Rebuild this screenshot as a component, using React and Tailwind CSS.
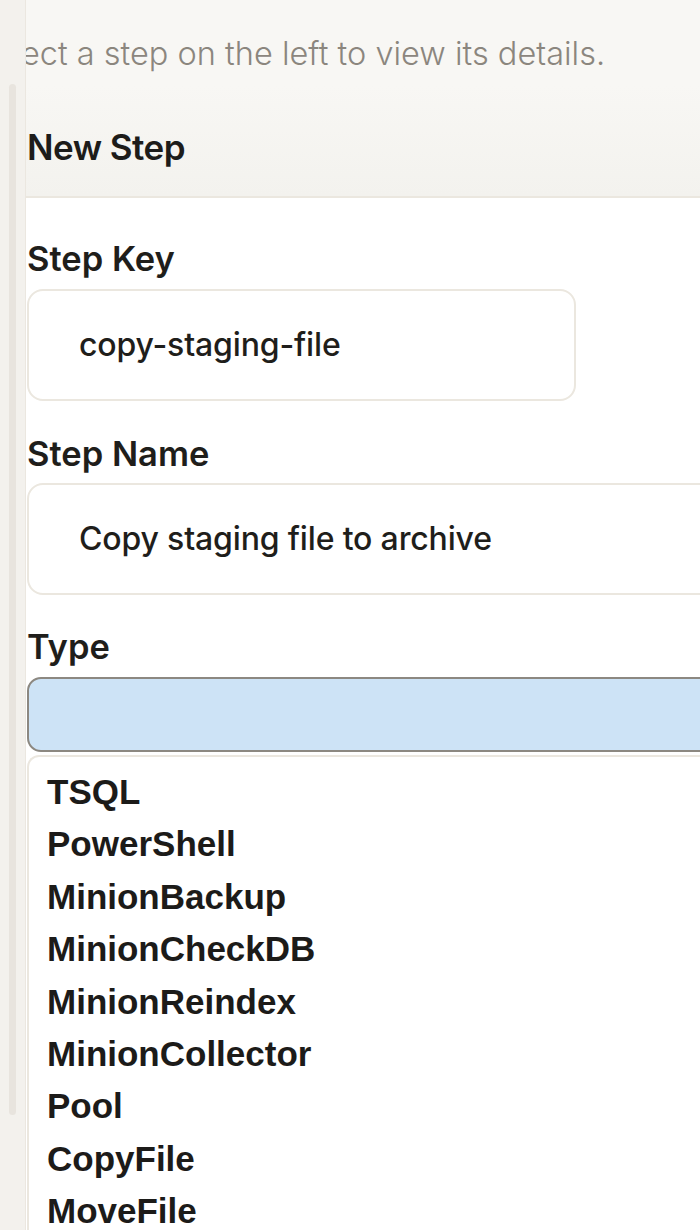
import React from 'react';

const STEP_TYPES = [
  'TSQL',
  'PowerShell',
  'MinionBackup',
  'MinionCheckDB',
  'MinionReindex',
  'MinionCollector',
  'Pool',
  'CopyFile',
  'MoveFile',
];

const Label = ({ children }) => (
  <label className="block text-[34.5px] leading-[38px] font-semibold text-[#1f1e1b]">
    {children}
  </label>
);

const TextField = ({ value, className }) => (
  <div
    className={`h-[112px] flex items-center pl-[50px] bg-white border-2 border-[#ebe7df] rounded-[16px] text-[32px] font-medium text-[#1f1e1b] tracking-[-0.005em] whitespace-nowrap ${className}`}
  >
    {value}
  </div>
);

export default function App() {
  return (
    <div
      className="flex min-h-screen bg-[#f8f7f4] overflow-hidden"
      style={{ fontFamily: 'Inter, "Noto Sans", sans-serif' }}
    >
      {/* sidebar edge with its scrollbar */}
      <aside className="w-[26px] shrink-0 bg-[#f3f1ed] border-r border-[#ebe7e0] pt-[84px]">
        <div className="ml-[9px] w-[7px] h-[1031px] rounded-full bg-[#e8e4de]" />
      </aside>

      <main className="flex-1 min-w-0 overflow-hidden">
        <div className="h-[85px] pt-[35px] overflow-hidden">
          <p className="-ml-[52px] text-[32.5px] leading-[38px] font-light text-[#8b867e] whitespace-nowrap">
            Select a step on the left to view its details.
          </p>
        </div>

        <header className="h-[113px] pt-[42px] pl-px bg-gradient-to-b from-[#f8f7f4] to-[#f3f2ee] border-b-2 border-[#ebe7df]">
          <h2 className="text-[35px] leading-[40px] font-semibold text-[#1d1c1a] tracking-[-0.015em]">New Step</h2>
        </header>

        <section className="bg-white pl-px pt-[42px]">
          <Label>Step Key</Label>
          <TextField value="copy-staging-file" className="mt-[11px] w-[549px]" />

          <div className="mt-[34px]">
            <Label>Step Name</Label>
          </div>
          <TextField value="Copy staging file to archive" className="mt-[10px] w-[720px]" />

          <div className="mt-[33px]">
            <Label>Type</Label>
          </div>
          <div className="mt-[11px] w-[720px] h-[75px] bg-[#cde3f6] border-2 border-[#8c8881] rounded-[14px]" />

          <ul
            className="mt-[3px] w-[720px] h-[480px] bg-white border-2 border-r-0 border-b-0 border-[#ebe7df] rounded-tl-[12px] pt-[9px] pl-[18px]"
            style={{ fontFamily: '"Liberation Sans", Arial, sans-serif' }}
          >
            {STEP_TYPES.map((t) => (
              <li key={t} className="h-[52.4px] flex items-center text-[35px] font-bold text-[#1c1b19]">
                {t}
              </li>
            ))}
          </ul>
        </section>
      </main>
    </div>
  );
}
